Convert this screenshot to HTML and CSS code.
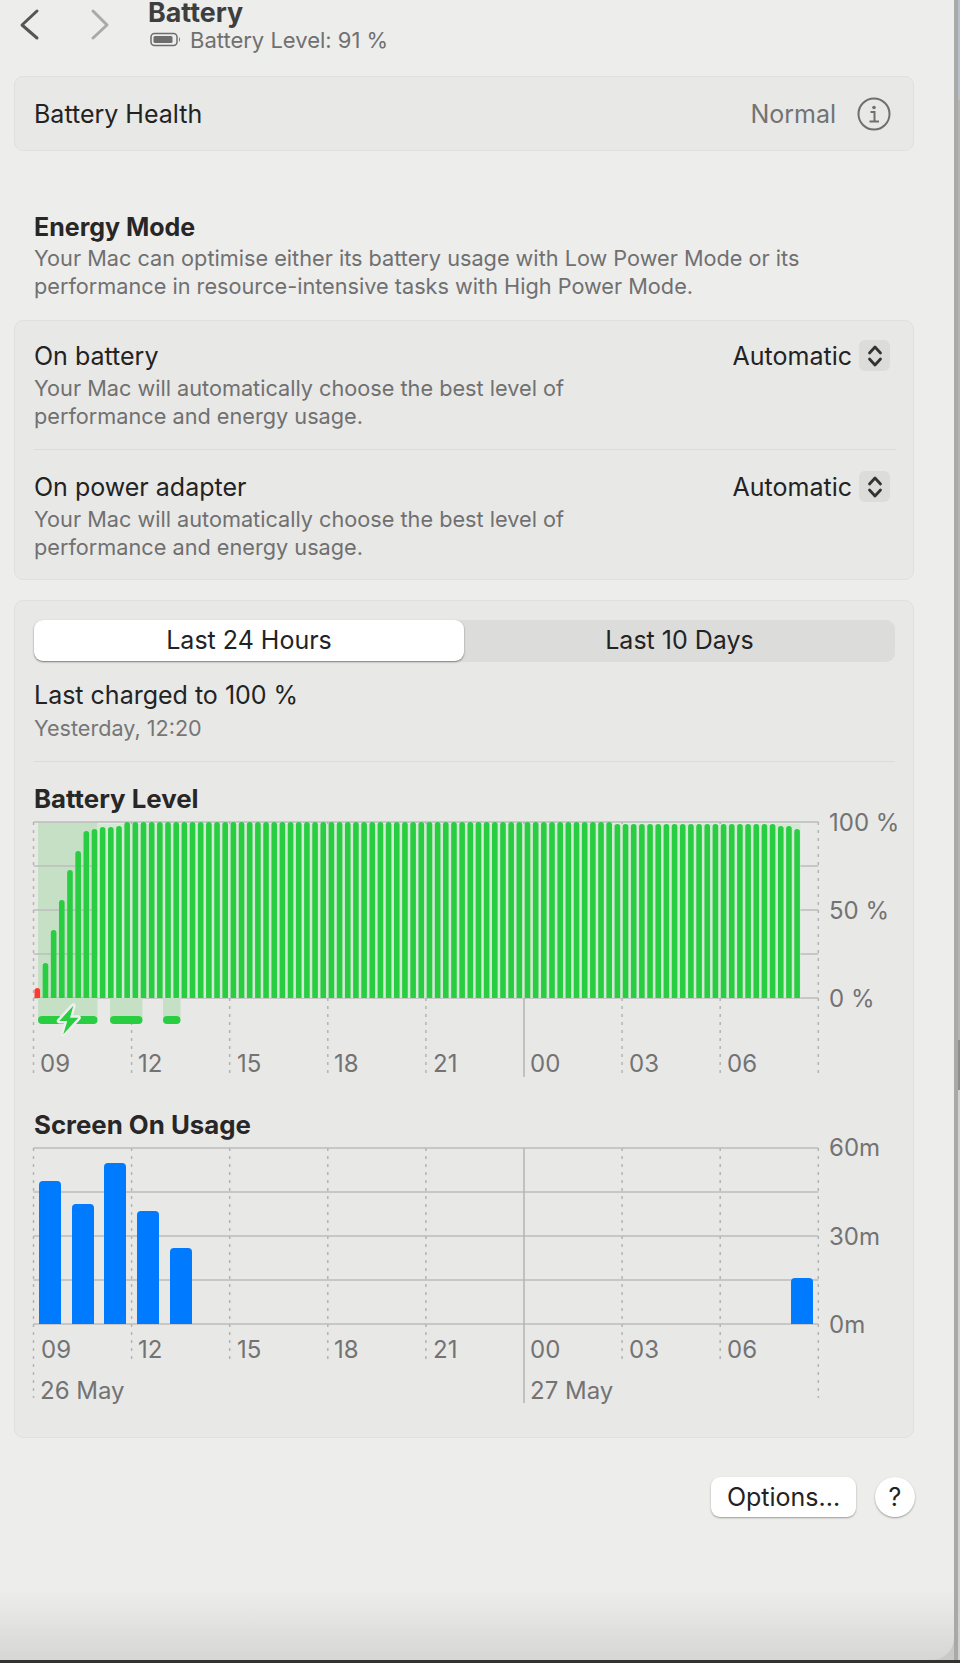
FILE: index.html
```html
<!DOCTYPE html>
<html lang="en">
<head>
    <meta charset="UTF-8">
    <title>Battery</title>
    <link rel="stylesheet" href="styles.css">
</head>
<body>
    <main class="window">
        <header class="toolbar">
            <svg class="nav" width="130" height="48" viewBox="0 0 130 48">
                <path class="back" d="M37 11 L22 25 L37 38"/>
                <path class="forward" d="M93 11 L107 25 L93 38"/>
            </svg>
            <div class="title">
                <h1>Battery</h1>
                <p>
                    <svg width="32" height="16" viewBox="0 0 32 16">
                        <rect class="batt-case" x="1" y="1.5" width="26" height="12" rx="3.5"/>
                        <rect class="batt-fill" x="3.5" y="4" width="19" height="7" rx="1.5"/>
                        <path class="batt-fill" d="M29 5 q2 2.5 0 5z"/>
                    </svg>
                    Battery Level: 91 %
                </p>
            </div>
        </header>

        <section class="card health">
            <span>Battery Health</span>
            <span class="value">Normal</span>
            <svg width="34" height="34" viewBox="0 0 34 34">
                <circle class="info-ring" cx="17" cy="17" r="15.5"/>
                <circle class="info-dot" cx="17" cy="10.5" r="1.8"/>
                <path class="info-i" d="M13.5 15 H17.5 V24 M12.5 24.5 H22"/>
            </svg>
        </section>

        <section class="intro">
            <h2>Energy Mode</h2>
            <p>Your Mac can optimise either its battery usage with Low Power Mode or its<br>performance in resource-intensive tasks with High Power Mode.</p>
        </section>

        <section class="card modes">
            <div class="mode">
                <div>
                    <h3>On battery</h3>
                    <p>Your Mac will automatically choose the best level of<br>performance and energy usage.</p>
                </div>
                <div class="select">
                    Automatic
                    <span class="stepper">
                        <svg width="16" height="24" viewBox="0 0 16 24"><path d="M2.5 9 L8 3 L13.5 9 M2.5 15 L8 21 L13.5 15"/></svg>
                    </span>
                </div>
            </div>
            <div class="mode">
                <div>
                    <h3>On power adapter</h3>
                    <p>Your Mac will automatically choose the best level of<br>performance and energy usage.</p>
                </div>
                <div class="select">
                    Automatic
                    <span class="stepper">
                        <svg width="16" height="24" viewBox="0 0 16 24"><path d="M2.5 9 L8 3 L13.5 9 M2.5 15 L8 21 L13.5 15"/></svg>
                    </span>
                </div>
            </div>
        </section>

        <section class="card usage">
            <div class="segments">
                <span class="active">Last 24 Hours</span>
                <span>Last 10 Days</span>
            </div>
            <div class="charged">
                <h3>Last charged to 100 %</h3>
                <p>Yesterday, 12:20</p>
            </div>

            <h4 class="chart-title">Battery Level</h4>
            <svg id="level" class="chart level" width="880" height="264" viewBox="30 816 880 264">
                <g class="plot"></g>
                <text class="axis" x="829" y="831">100 %</text>
                <text class="axis" x="829" y="919">50 %</text>
                <text class="axis" x="829" y="1007">0 %</text>
                <text x="40" y="1072">09</text>
                <text x="138" y="1072">12</text>
                <text x="237" y="1072">15</text>
                <text x="334" y="1072">18</text>
                <text x="433" y="1072">21</text>
                <text x="530" y="1072">00</text>
                <text x="629" y="1072">03</text>
                <text x="727" y="1072">06</text>
            </svg>

            <h4 class="chart-title second">Screen On Usage</h4>
            <svg id="screen" class="chart" width="880" height="264" viewBox="30 1142 880 264">
                <g class="plot"></g>
                <text class="axis" x="829" y="1156">60m</text>
                <text class="axis" x="829" y="1245">30m</text>
                <text class="axis" x="829" y="1333">0m</text>
                <text x="41" y="1358">09</text>
                <text x="138" y="1358">12</text>
                <text x="237" y="1358">15</text>
                <text x="334" y="1358">18</text>
                <text x="433" y="1358">21</text>
                <text x="530" y="1358">00</text>
                <text x="629" y="1358">03</text>
                <text x="727" y="1358">06</text>
                <text x="40" y="1399">26 May</text>
                <text x="530" y="1399">27 May</text>
            </svg>
        </section>

        <footer class="actions">
            <button class="options">Options...</button>
            <button class="help">?</button>
        </footer>
    </main>

    <div class="backdrop">
        <span class="strip-blue"></span>
        <span class="strip-gray"></span>
        <span class="strip-dark"></span>
        <span class="strip-light"></span>
    </div>
    <div class="dock-line"></div>

    <script src="chart.js"></script>
</body>
</html>
```

FILE: styles.css
```css
* {
    box-sizing: border-box;
}

html, body {
    height: 100%;
}

body {
    margin: 0;
    display: flex;
    overflow: hidden;
    position: relative;
    font-family: Inter, "Noto Sans", sans-serif;
    font-size: 25px;
    color: #232323;
    background-color: #c9c9c8;
}

h1, h2, h3, h4, p {
    margin: 0;
    font-size: inherit;
    font-weight: 400;
}

.window {
    width: 954px;
    height: 1660px;
    flex-shrink: 0;
    padding: 0 40px 0 14px;
    background: linear-gradient(#ededec 1590px, #d6d6d5 1660px);
    border-bottom-right-radius: 22px;
}

.toolbar {
    height: 76px;
    display: flex;
    align-items: flex-start;
}

.nav {
    flex-shrink: 0;
    margin-left: -14px;
    margin-right: 18px;
    fill: none;
    stroke-width: 3;
    stroke-linecap: round;
    stroke-linejoin: round;
}

.back {
    stroke: #555;
}

.forward {
    stroke: #aaa;
}

.title h1 {
    font-size: 26.8px;
    font-weight: 700;
    line-height: 24px;
    color: #3e3e3e;
}

.title p {
    display: flex;
    align-items: center;
    gap: 8px;
    margin-top: 3px;
    margin-left: 2px;
    font-size: 22px;
    line-height: 26px;
    color: #707070;
}

.batt-case {
    fill: none;
    stroke: #6d6d6d;
    stroke-width: 1.5;
}

.batt-fill {
    fill: #6d6d6d;
}

.card {
    background-color: #e8e8e7;
    border: 1px solid #e0e0df;
    border-radius: 9px;
    padding: 0 18px 0 19px;
}

.health {
    height: 75px;
    display: flex;
    align-items: center;
}

.health .value {
    margin-left: auto;
    margin-right: 21px;
    color: #737373;
}

.health svg {
    margin-right: 4px;
}

.info-ring {
    fill: none;
    stroke: #6f6f6f;
    stroke-width: 2;
}

.info-dot {
    fill: #6f6f6f;
}

.info-i {
    fill: none;
    stroke: #6f6f6f;
    stroke-width: 2;
}

.intro {
    padding: 61px 0 0 20px;
    height: 169px;
}

.intro h2 {
    font-weight: 700;
    line-height: 30px;
    color: #272727;
}

.intro p {
    margin-top: 3px;
    font-size: 21.7px;
    line-height: 27.5px;
    color: #707070;
}

.modes {
    height: 260px;
    margin-bottom: 20px;
}

.mode {
    height: 128px;
    display: flex;
    justify-content: space-between;
    padding: 19px 5px 0 0;
}

.mode + .mode {
    height: 130px;
    border-top: 1px solid #dcdcdb;
    margin-right: -1px;
    padding-top: 21px;
    padding-right: 6px;
}

.mode h3 {
    line-height: 32px;
}

.mode p {
    margin-top: 3px;
    font-size: 21.7px;
    line-height: 27.5px;
    color: #707070;
}

.select {
    display: flex;
    align-items: flex-start;
    gap: 7px;
    line-height: 32px;
}

.stepper {
    width: 31px;
    height: 31px;
    display: flex;
    align-items: center;
    justify-content: center;
    background-color: #dcdcdb;
    border-radius: 6px;
}

.stepper svg {
    fill: none;
    stroke: #333;
    stroke-width: 2.8;
    stroke-linecap: round;
    stroke-linejoin: round;
}

.usage {
    height: 838px;
    padding-top: 19px;
}

.segments {
    display: grid;
    grid-template-columns: 430px 1fr;
    height: 42px;
    background-color: #dcdcdb;
    border-radius: 9px;
    text-align: center;
    line-height: 40px;
}

.segments .active {
    height: 41px;
    background-color: #fff;
    border-radius: 9px;
    box-shadow: 0 1px 2px rgba(0, 0, 0, .45);
}

.charged {
    height: 100px;
    padding-top: 17px;
    border-bottom: 1px solid #dcdcdb;
}

.charged h3 {
    line-height: 32px;
}

.charged p {
    margin-top: 3px;
    font-size: 21.6px;
    line-height: 28px;
    color: #767676;
}

.chart-title {
    height: 32px;
    margin-top: 22px;
    font-size: 25.8px;
    font-weight: 700;
    line-height: 30px;
    color: #272727;
}

.chart-title.second {
    margin-top: 30px;
}

.chart {
    display: block;
    margin-left: -4px;
    overflow: visible;
}

.chart text {
    font-size: 24px;
    fill: #737373;
}

.grid-line {
    stroke: #bdbdbc;
    stroke-width: 1.5;
}

.hour-line {
    stroke: #b4b4b3;
    stroke-width: 1.5;
    stroke-dasharray: 3 5;
}

.midnight-line {
    stroke: #b4b4b3;
    stroke-width: 1.5;
}

.band {
    fill: #c6e0c5;
}

.bar-gaps {
    fill: #d3e9d3;
}

.bar-level {
    fill: #28cd41;
}

.bar-low {
    fill: #ff3b30;
}

.bar-screen {
    fill: #007aff;
}

.bolt {
    fill: #28cd41;
    stroke: #eeeeed;
    stroke-width: 5;
    stroke-linejoin: round;
    paint-order: stroke;
}

.actions {
    display: flex;
    justify-content: flex-end;
    align-items: center;
    gap: 19px;
    margin-top: 39px;
    margin-right: -1px;
}

.actions button {
    height: 40px;
    border: 0;
    padding: 0;
    background-color: #fff;
    font-family: inherit;
    font-size: 25px;
    color: #232323;
    box-shadow: 0 1px 2px rgba(0, 0, 0, .35);
}

.options {
    width: 145px;
    border-radius: 9px;
}

.help {
    width: 40px;
    border-radius: 50%;
}

.backdrop {
    flex-grow: 1;
    display: flex;
    flex-direction: column;
    height: 1660px;
    border-left: 4px solid #a9a9a8;
}

.backdrop span {
    display: block;
}

.strip-blue {
    height: 100px;
    background-color: #b9c0ca;
}

.strip-gray {
    height: 940px;
    background-color: #b5b5b4;
}

.strip-dark {
    height: 50px;
    background-color: #8f8f8e;
}

.strip-light {
    flex-grow: 1;
    background-color: #d2d2d1;
}

.dock-line {
    position: absolute;
    left: 0;
    right: 0;
    bottom: 0;
    height: 3px;
    background-color: #333;
}
```

FILE: chart.js
```js
const NS = 'http://www.w3.org/2000/svg'
const HOURS = [33.5, 131.6, 229.7, 327.8, 425.9, 524, 622.1, 720.2, 818.3]

function add(parent, tag, attrs) {
    const el = document.createElementNS(NS, tag)
    for (const key in attrs) el.setAttribute(key, attrs[key])
    parent.appendChild(el)
    return el
}

function line(parent, cls, x1, y1, x2, y2) {
    add(parent, 'line', { class: cls, x1, y1, x2, y2 })
}

// horizontal rules every quarter, then the hour marks
function drawGrid(plot, top, bottom, hourEnd, edgeEnd, midnightEnd) {
    const step = (bottom - top) / 4
    for (let i = 0; i < 5; i++) {
        const y = top + step * i
        line(plot, 'grid-line', HOURS[0], y, HOURS[8], y)
    }
    HOURS.forEach((x, i) => {
        if (i === 5) line(plot, 'midnight-line', x, top, x, midnightEnd)
        else line(plot, 'hour-line', x, top, x, i === 0 || i === 8 ? edgeEnd : hourEnd)
    })
}

// battery level
const $level = document.querySelector('#level .plot')
const BASE = 998
const bands = [[38, 97.5], [110, 142.5], [163, 180.5]]

add($level, 'rect', { class: 'band', x: 38, y: 822, width: 59.5, height: 176 })
drawGrid($level, 822, BASE, 1077, 1077, 1077)
add($level, 'rect', { class: 'bar-gaps', x: 97.5, y: 824, width: 703, height: 174 })
bands.forEach(([a, b]) => {
    add($level, 'rect', { class: 'band', x: a, y: BASE, width: b - a, height: 20 })
    add($level, 'rect', { class: 'bar-level', x: a, y: 1016, width: b - a, height: 8, rx: 4 })
})

const clip = add(add($level, 'defs', {}), 'clipPath', { id: 'above-base' })
add(clip, 'rect', { x: 30, y: 800, width: 800, height: BASE - 800 })
const $bars = add($level, 'g', { 'clip-path': 'url(#above-base)' })

const rising = [988, 963, 930, 900, 870, 851, 831, 829, 827, 827, 826]
const falling = { 91: 826, 92: 826, 93: 829 }

for (let i = 0; i < 94; i++) {
    let top = rising[i] ?? (i > 70 ? 824 : 822)
    if (falling[i]) top = falling[i]
    add($bars, 'rect', {
        class: i === 0 ? 'bar-low' : 'bar-level',
        x: 34.5 + i * 8.17,
        y: top,
        width: 5.6,
        height: 1030 - top,
        rx: 2.8
    })
}

add($level, 'path', { class: 'bolt', d: 'M73.3 1005.7 L59.3 1021 H67.3 L63.3 1034.3 L78.3 1017.7 H70 Z' })

// screen on usage
const $screen = document.querySelector('#screen .plot')
drawGrid($screen, 1148, 1324, 1359, 1398, 1403)

const usage = [[39, 1181], [72, 1204], [104, 1163], [137, 1211], [170, 1248], [791, 1278]]
usage.forEach(([x, top]) => {
    add($screen, 'path', {
        class: 'bar-screen',
        d: `M${x} 1324 V${top + 4} q0 -4 4 -4 H${x + 18} q4 0 4 4 V1324 Z`
    })
})
```
